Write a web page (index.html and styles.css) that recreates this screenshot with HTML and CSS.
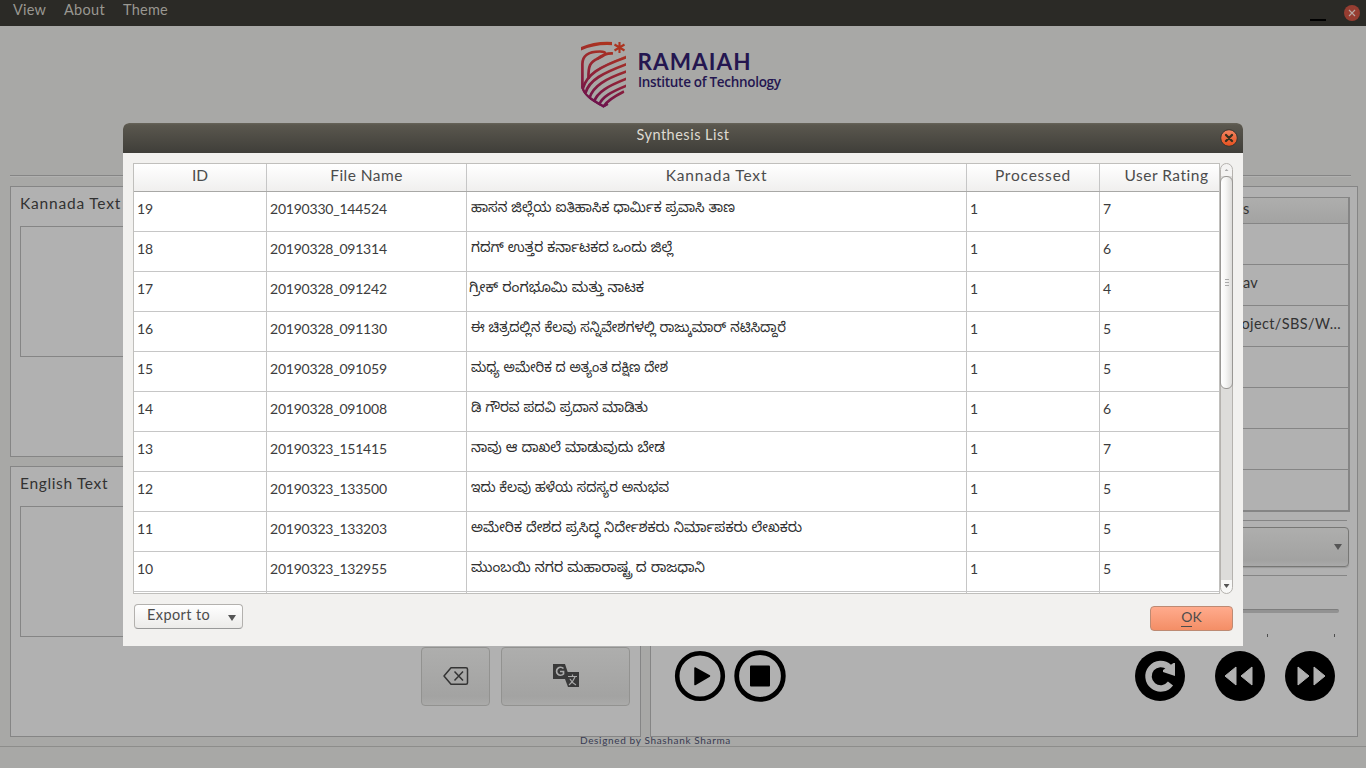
FILE: index.html
```html
<!DOCTYPE html>
<html lang="en">
<head>
<meta charset="utf-8">
<title>Synthesis List</title>
<link rel="stylesheet" href="styles.css">
</head>
<body>
<div class="app">
  <nav class="menubar">
    <span class="menu-view">View</span><span class="menu-about">About</span><span class="menu-theme">Theme</span>
    <i class="minimize"></i>
    <svg class="app-close" width="16" height="16" viewBox="0 0 16 16"><circle cx="8" cy="8" r="8" fill="#963d31"/><path d="M5 5l6 6M11 5l-6 6" stroke="#b9aaa5" stroke-width="1.1"/></svg>
  </nav>
  <header class="brand">
    <svg width="210" height="72" viewBox="576 38 210 72">
      <defs>
        <linearGradient id="shield" gradientUnits="userSpaceOnUse" x1="590" y1="106" x2="612" y2="46"><stop offset="0" stop-color="#69104f"/><stop offset=".5" stop-color="#8f2238"/><stop offset="1" stop-color="#ac3420"/></linearGradient>
        <clipPath id="edge"><path d="M581 40H612V52L626 51V87C626 97 612 103 603.500 108C594 103 581 95 581 86Z"/></clipPath>
      </defs>
      <g clip-path="url(#edge)" fill="none" stroke="url(#shield)" stroke-width="2.700">
        <path d="M580 49.300Q595 42.300 613 43.700" stroke-width="3.200"/>
        <path d="M582.400 89V64C582.400 55 590 51.500 600 51.500Q606 51.500 605 54Q604 56 598 58.500C590 62 588 66 588.500 79"/>
        <path d="M597 59Q605 53 613 53.500"/>
        <path d="M583 88C587 75 598 67 627 57"/>
        <path d="M588.500 78C594 69 606 65 627 56" stroke-width="1.500" opacity=".5"/>
        <path d="M585.500 93C589 80 603 73 627 64"/>
        <path d="M589.500 98C593 86 605 79 627 71.300"/>
        <path d="M594 102C597 92 608 86 627 78.500"/>
        <path d="M599 105C602 97 611 92 627 85.500"/>
        <path d="M604 106C607 101 615 96 624 91.500"/>
        <path d="M582.400 86C583 96 594 101 603.500 106.500L608 104"/>
      </g>
      <path d="M619.500 42V53M614.500 44.500L624.500 50.500M624.500 44.500L614.500 50.500" stroke="#ac3420" stroke-width="2.100"/>
      <text class="logo-name" x="637.500" y="69.500" textLength="113">RAMAIAH</text>
      <text class="logo-sub" x="638" y="87" textLength="143">Institute of Technology</text>
    </svg>
  </header>
  <hr class="rule">
  <main class="workspace">
    <div class="left">
      <section class="panel"><h2 class="kt">Kannada Text</h2><div class="textbox"></div></section>
      <section class="panel"><h2 class="et">English Text</h2><div class="textbox"></div>
        <div class="actions">
          <button class="tool erase"><svg width="26" height="20" viewBox="0 0 26 20" fill="none" stroke="#343434" stroke-width="1.500"><path d="M8 1.700H23Q24.500 1.700 24.500 3.200V16.800Q24.500 18.300 23 18.300H8L1 10Z" stroke-linejoin="round"/><path d="M11.500 5.500l8.500 9M20 5.500l-8.500 9"/></svg></button>
          <button class="tool translate"><svg width="26" height="24" viewBox="0 0 26 24"><path d="M0 0H12L17 15H0Z" fill="#393939"/><path d="M13 8H26V23H15L12 15H17Z" fill="#393939"/><path d="M10.500 4.500A4 4 0 1 0 10.500 10V7.500H7" fill="none" stroke="#aaa" stroke-width="1.700"/><path d="M15 12.500H24M19.500 10.500V12.500M22 13Q20 18 16 21M17 15Q19 19 23 21" fill="none" stroke="#aaa" stroke-width="1.200"/></svg></button>
        </div>
      </section>
    </div>
    <section class="panel right">
      <div class="paths"><div class="path-head">s</div><div></div><div>av</div><div class="long">roject/SBS/W…</div><div></div><div></div><div></div><div class="last"></div></div>
      <hr class="thin">
      <div class="combo"><i class="arrow"></i></div>
      <hr class="thin">
      <div class="slider"></div>
      <div class="ticks"><i></i><i></i></div>
      <div class="player">
        <svg class="play" width="52" height="52" viewBox="-26 -26 52 52"><circle r="22.800" fill="none" stroke="#000" stroke-width="4.600"/><path d="M-5-8L9.500 0L-5 8.500Z" stroke="#000" stroke-width="1.500" stroke-linejoin="round"/></svg>
        <svg class="stop" width="52" height="52" viewBox="-26 -26 52 52"><circle r="23.300" fill="none" stroke="#000" stroke-width="4.800"/><rect x="-10" y="-10.500" width="20" height="21" rx="1"/></svg>
        <svg class="reload" width="50" height="50" viewBox="-25 -25 50 50"><circle r="25"/><path d="M10.500 7.500A12.200 12.200 0 1 1 9-8.700" fill="none" stroke="#b1b1b1" stroke-width="6.400"/><path d="M13.500-13H15V0L3-4V-6Z" fill="#b1b1b1"/></svg>
        <svg class="rewind" width="50" height="50" viewBox="-25 -25 50 50"><circle r="25"/><path d="M-15 0L-4-9V9ZM1 0L12-9V9Z" fill="#b1b1b1" stroke="#b1b1b1" stroke-linejoin="round"/></svg>
        <svg class="forward" width="50" height="50" viewBox="-25 -25 50 50"><circle r="25"/><path d="M-12-9L-1 0L-12 9ZM4-9L15 0L4 9Z" fill="#b1b1b1" stroke="#b1b1b1" stroke-linejoin="round"/></svg>
      </div>
    </section>
  </main>
  <footer class="status"><span>Designed by Shashank Sharma</span></footer>
</div>

<div class="dialog">
  <div class="titlebar"><span>Synthesis List</span>
    <svg class="close" width="18" height="18" viewBox="0 0 18 18"><defs><linearGradient id="cl" x2="0" y2="1"><stop stop-color="#f38562"/><stop offset="1" stop-color="#e5501e"/></linearGradient></defs><circle cx="9" cy="9" r="8.300" fill="url(#cl)" stroke="#38352f" stroke-width="1"/><path d="M6 6l6 6M12 6l-6 6" stroke="#37301f" stroke-width="2.300" stroke-linecap="round"/></svg>
  </div>
  <div class="content">
    <div class="tablewrap">
      <div class="grid">
        <div class="row head"><b class="h-id">ID</b><b class="h-file">File Name</b><b class="h-kn">Kannada Text</b><b class="h-proc">Processed</b><b class="h-rate">User Rating</b></div>
        <div class="row"><span>19</span><span class="file">20190330_144524</span><svg class="kn"><text x="4" y="20" textLength="264" lengthAdjust="spacingAndGlyphs">ಹಾಸನ ಜಿಲ್ಲೆಯ ಐತಿಹಾಸಿಕ ಧಾರ್ಮಿಕ ಪ್ರವಾಸಿ ತಾಣ</text></svg><span>1</span><span>7</span></div>
        <div class="row"><span>18</span><span class="file">20190328_091314</span><svg class="kn"><text x="4" y="20" textLength="202" lengthAdjust="spacingAndGlyphs">ಗದಗ್ ಉತ್ತರ ಕರ್ನಾಟಕದ ಒಂದು ಜಿಲ್ಲೆ</text></svg><span>1</span><span>6</span></div>
        <div class="row"><span>17</span><span class="file">20190328_091242</span><svg class="kn"><text x="2" y="20" textLength="175" lengthAdjust="spacingAndGlyphs">ಗ್ರೀಕ್ ರಂಗಭೂಮಿ ಮತ್ತು ನಾಟಕ</text></svg><span>1</span><span>4</span></div>
        <div class="row"><span>16</span><span class="file">20190328_091130</span><svg class="kn"><text x="4" y="20" textLength="315" lengthAdjust="spacingAndGlyphs">ಈ ಚಿತ್ರದಲ್ಲಿನ ಕೆಲವು ಸನ್ನಿವೇಶಗಳಲ್ಲಿ ರಾಜ್ಕುಮಾರ್ ನಟಿಸಿದ್ದಾರೆ</text></svg><span>1</span><span>5</span></div>
        <div class="row"><span>15</span><span class="file">20190328_091059</span><svg class="kn"><text x="4" y="20" textLength="197" lengthAdjust="spacingAndGlyphs">ಮಧ್ಯ ಅಮೇರಿಕ ದ ಅತ್ಯಂತ ದಕ್ಷಿಣ ದೇಶ</text></svg><span>1</span><span>5</span></div>
        <div class="row"><span>14</span><span class="file">20190328_091008</span><svg class="kn"><text x="4" y="20" textLength="177" lengthAdjust="spacingAndGlyphs">ಡಿ ಗೌರವ ಪದವಿ ಪ್ರದಾನ ಮಾಡಿತು</text></svg><span>1</span><span>6</span></div>
        <div class="row"><span>13</span><span class="file">20190323_151415</span><svg class="kn"><text x="4" y="20" textLength="194" lengthAdjust="spacingAndGlyphs">ನಾವು ಆ ದಾಖಲೆ ಮಾಡುವುದು ಬೇಡ</text></svg><span>1</span><span>7</span></div>
        <div class="row"><span>12</span><span class="file">20190323_133500</span><svg class="kn"><text x="4" y="20" textLength="198" lengthAdjust="spacingAndGlyphs">ಇದು ಕೆಲವು ಹಳೆಯ ಸದಸ್ಯರ ಅನುಭವ</text></svg><span>1</span><span>5</span></div>
        <div class="row"><span>11</span><span class="file">20190323_133203</span><svg class="kn"><text x="4" y="20" textLength="331" lengthAdjust="spacingAndGlyphs">ಅಮೇರಿಕ ದೇಶದ ಪ್ರಸಿದ್ಧ ನಿರ್ದೇಶಕರು ನಿರ್ಮಾಪಕರು ಲೇಖಕರು</text></svg><span>1</span><span>5</span></div>
        <div class="row"><span>10</span><span class="file">20190323_132955</span><svg class="kn"><text x="4" y="20" textLength="234" lengthAdjust="spacingAndGlyphs">ಮುಂಬಯಿ ನಗರ ಮಹಾರಾಷ್ಟ್ರ ದ ರಾಜಧಾನಿ</text></svg><span>1</span><span>5</span></div>
        <div class="row"><span></span><span></span><span></span><span></span><span></span></div>
      </div>
      <div class="scroll"><i class="up"></i><div class="thumb"><i></i><i></i><i></i></div><i class="arrow down"></i></div>
    </div>
    <div class="buttons"><button class="export"><span>Export to</span><i class="arrow"></i></button><button class="ok"><span><u>O</u>K</span></button></div>
  </div>
</div>
</body>
</html>
```
FILE: styles.css
```css
* { box-sizing: border-box; }
body { margin: 0; width: 1366px; height: 768px; overflow: hidden; position: relative; font-family: Lato, "Noto Sans", sans-serif; font-size: 15px; color: #4c4c4c; }
button { font: inherit; color: inherit; padding: 0; }
.app { height: 768px; background: #a8a8a6; display: flex; flex-direction: column; }
.menubar { height: 26px; flex: none; background: #2b2a26; color: #999791; display: flex; line-height: 20px; padding: 0 6px 0 13px; font-size: 14.500px; }
.menu-view { width: 51px; letter-spacing: .2px; }
.menu-about { width: 59px; letter-spacing: .3px; }
.menu-theme { letter-spacing: .25px; }
.minimize { width: 16px; height: 2px; background: #000; margin: 19px 18px 0 auto; }
.app-close { margin-top: 5px; }
.brand { height: 149px; flex: none; padding: 12px 0 0 576px; }
.brand svg { display: block; }
.logo-name { font: 700 22.500px Lato, sans-serif; fill: #241650; }
.logo-sub { font: 600 13.500px "Open Sans", sans-serif; fill: #241650; }
.rule { width: 1341px; height: 2px; margin: 0 0 9px 10px; border: 0; background: #858585; border-bottom: 1px solid #b1b1b0; flex: none; }
.workspace { height: 551px; margin-left: 10px; display: flex; gap: 9px; flex: none; }
.left { width: 631px; display: grid; grid-template-rows: 271px 271px; gap: 9px; }
.panel { border: 1px solid #858585; background: #b1b1b1; color: #323232; }
.panel h2 { margin: 0 0 0 9px; height: 39px; line-height: 33px; font-size: 15.500px; font-weight: 400; white-space: nowrap; }
.kt { letter-spacing: .8px; }
.et { letter-spacing: .65px; }
.textbox { height: 131px; margin: 0 10px 10px 9px; border: 1px solid #858585; }
.actions { display: flex; justify-content: flex-end; gap: 11px; padding-right: 10px; }
.tool { height: 59px; border: 1px solid #929290; border-radius: 4px; background: linear-gradient(#aeaead, #a3a3a2 85%, #aaaaa9); display: grid; place-items: center; }
.tool svg { margin-top: -2px; }
.erase { width: 69px; }
.translate { width: 129px; }
.right { width: 708px; padding: 10px 8px 0; }
.paths { height: 315px; border: 1px solid #858585; border-right: 2px solid #858585; border-bottom: 2px solid #858585; overflow: hidden; margin-right: -1px; }
.paths div { height: 41px; border-bottom: 1px solid #858585; padding-left: 583px; line-height: 36px; font-size: 14.500px; white-space: nowrap; letter-spacing: .3px; }
.paths .long { padding: 0 7px 0 0; text-align: right; letter-spacing: .4px; }
.paths .path-head { height: 26px; line-height: 21px; background: linear-gradient(#aeaead, #a3a3a2); }
.thin { height: 1px; border: 0; background: #858585; margin: 8px 2px 6px; }
.combo { height: 40px; border: 1px solid #777775; border-radius: 4px; background: linear-gradient(#aeaead, #a2a2a1 85%, #aaa); box-shadow: 0 1px 1px #999; display: flex; justify-content: flex-end; align-items: center; padding-right: 6px; }
.arrow { width: 8px; height: 6px; background: #555; clip-path: polygon(0 0, 100% 0, 50% 100%); }
.slider { height: 4px; margin: 33px 10px 21px; background: #929292; border-top: 1px solid #7d7d7d; border-radius: 2px; }
.ticks { height: 3px; display: flex; justify-content: flex-end; gap: 66px; padding-right: 14px; }
.ticks i { width: 1px; background: #4d4d4d; }
.combo + .thin { margin-top: 8px; }
.player { display: flex; margin: 13px 0 0 15px; }
.player svg { flex: none; }
.play, .stop { margin-right: 8px; }
.reload { margin: 1px 30px 0 341px; }
.rewind { margin: 1px 20px 0 0; }
.forward { margin-top: 1px; }
.status { flex: 1; padding-left: 580px; font-size: 10px; line-height: 7px; letter-spacing: .65px; color: #373b52; background: linear-gradient(transparent 9px, #8d8d8b 9px, #8d8d8b 10px, transparent 10px); }
.status span { display: block; }

.dialog { position: absolute; left: 123px; top: 123px; width: 1120px; height: 523px; background: #f2f1ef; border-radius: 6px 6px 0 0; overflow: hidden; }
.titlebar { height: 30px; background: linear-gradient(#67645a, #5a574e 2px, #3f3e39); color: #dfdbd2; position: relative; text-align: center; line-height: 23px; font-size: 14.500px; letter-spacing: .5px; }
.close { position: absolute; right: 5px; top: 6px; }
.content { padding: 10px 10px 0; }
.tablewrap { display: flex; height: 431px; }
.grid { width: 1087px; height: 431px; overflow: hidden; border: 1px solid #c0bfbc; background: #fff; }
.row { display: grid; grid-template-columns: 133px 200px 500px 133px 134px; height: 40px; border-bottom: 1px solid #c6c6c6; width: 1100px; font-size: 14px; line-height: 34px; }
.row > * { border-right: 1px solid #c6c6c6; height: 39px; }
.row span { padding-left: 3px; color: #3c3c3c; letter-spacing: -.22px; }
.kn { width: 500px; overflow: hidden; display: block; font: 14px "Noto Sans Kannada", "Noto Sans", sans-serif; fill: #303030; }
.head { height: 28px; background: linear-gradient(#fff, #f0efee); border-color: #a8a8a6; font-size: 15.500px; line-height: 23px; text-align: center; }
.head b { font-weight: 400; height: 27px; }
.h-id { letter-spacing: 0; }
.h-file { letter-spacing: .45px; }
.h-kn { letter-spacing: .85px; }
.h-proc { letter-spacing: .8px; }
.h-rate { letter-spacing: .5px; }
.scroll { width: 13px; height: 431px; border: 1px solid #b5b2ae; border-radius: 7px; background: linear-gradient(#f4f3f2 0 12px, #dddcda 12px 416px, #f8f8f7 416px); display: flex; flex-direction: column; align-items: center; }
.up { width: 11px; height: 12px; flex: none; display: grid; place-items: center; }
.up::after { content: ""; width: 4px; height: 2px; background: #aaa; clip-path: polygon(50% 0, 100% 100%, 0 100%); }
.thumb { width: 13px; height: 213px; border: 1px solid #999794; border-radius: 6px; background: linear-gradient(90deg, #fff, #f7f7f6 40%, #dddcda); display: flex; flex-direction: column; align-items: center; justify-content: center; gap: 2px; flex: none; }
.thumb i { width: 4px; height: 1px; background: #aaa; }
.down { width: 6px; height: 4px; margin: auto 0 5px; }
.buttons { display: flex; justify-content: space-between; padding: 10px 0 0 1px; }
.export { width: 109px; height: 25px; border: 1px solid #b3b1ae; border-bottom-color: #999; border-radius: 4px; background: linear-gradient(#fff, #ecebe9); display: flex; justify-content: space-between; padding: 0 6px 0 12px; line-height: 20px; font-size: 14.500px; letter-spacing: .4px; }
.export .arrow { margin-top: 10px; }
.ok { width: 83px; height: 25px; margin-top: 2px; border: 1px solid #bd8a73; border-radius: 4px; background: linear-gradient(#ffab8d, #f48e66); line-height: 20px; font-size: 14px; display: flex; justify-content: center; }
.ok u { text-decoration: none; display: inline-block; height: 20px; border-bottom: 1px solid #4c4c4c; }
```
